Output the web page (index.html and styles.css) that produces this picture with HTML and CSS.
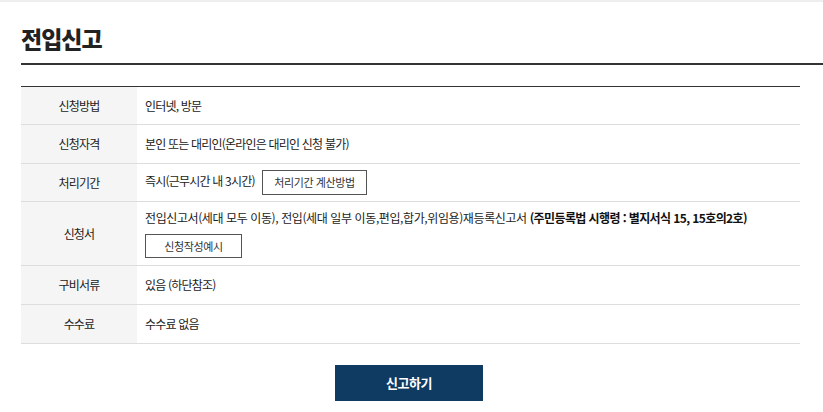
FILE: index.html
```html
<!DOCTYPE html>
<html lang="ko">
<head>
    <meta charset="UTF-8">
    <meta name="viewport" content="width=device-width, initial-scale=1.0">
    <title>전입신고</title>
    <link rel="stylesheet" href="styles.css">
</head>
<body>
    <div class="content">
        <h2 class="page-title">전입신고</h2>

        <table class="info-table">
            <tr class="short">
                <th>신청방법</th>
                <td>인터넷, 방문</td>
            </tr>
            <tr>
                <th>신청자격</th>
                <td>본인 또는 대리인(온라인은 대리인 신청 불가)</td>
            </tr>
            <tr class="short">
                <th>처리기간</th>
                <td>즉시(근무시간 내 3시간) <a href="#" class="btn-line">처리기간 계산방법</a></td>
            </tr>
            <tr class="tall">
                <th>신청서</th>
                <td>
                    <p>전입신고서(세대 모두 이동), 전입(세대 일부 이동,편입,합가,위임용)재등록신고서 <b>(주민등록법 시행령 : 별지서식 15, 15호의2호)</b></p>
                    <a href="#" class="btn-line wide">신청작성예시</a>
                </td>
            </tr>
            <tr>
                <th>구비서류</th>
                <td>있음 (하단참조)</td>
            </tr>
            <tr>
                <th>수수료</th>
                <td>수수료 없음</td>
            </tr>
        </table>

        <div class="btn-area">
            <a href="#" class="btn-submit">신고하기</a>
        </div>
    </div>
</body>
</html>
```

FILE: styles.css
```css
body {
    font-family: "Noto Sans CJK KR", "Noto Sans", sans-serif;
    color: #222;
    background-color: #ffffff;
    margin: 0;
    padding: 0;
    border-top: 2px solid #eeeeee;
}

.content {
    padding-left: 21px;
}

.page-title {
    margin: 0;
    padding: 21px 0 10px;
    font-size: 23px;
    line-height: 30px;
    font-weight: 900;
    letter-spacing: -1px;
    color: #222;
    border-bottom: 2px solid #333;
}

.info-table {
    width: 779px;
    margin-top: 21px;
    border-collapse: collapse;
    border-top: 1px solid #333;
    border-bottom: 1px solid #333;
    font-size: 12px;
    letter-spacing: -0.8px;
}

.info-table th,
.info-table td {
    height: 38px;
    padding: 0 8px;
    border-bottom: 1px solid #dddddd;
    line-height: 18px;
    vertical-align: middle;
}

.info-table tr.short th,
.info-table tr.short td {
    height: 37px;
}

.info-table th {
    width: 100px;
    background-color: #f5f5f5;
    font-weight: normal;
    text-align: center;
}

.info-table td {
    text-align: left;
}

.info-table tr.tall td {
    height: auto;
    padding-top: 7px;
    padding-bottom: 7px;
}

.info-table p {
    margin: 0;
    letter-spacing: -0.4px;
}

.info-table b {
    color: #111;
    letter-spacing: -0.6px;
}

.btn-line {
    display: inline-block;
    box-sizing: border-box;
    height: 25px;
    line-height: 23px;
    padding: 0 11px;
    margin-left: 5px;
    border: 1px solid #555;
    font-size: 11px;
    letter-spacing: -0.4px;
    color: #333;
    text-decoration: none;
    text-align: center;
    vertical-align: middle;
}

.btn-line.wide {
    display: block;
    width: 97px;
    height: 24px;
    line-height: 22px;
    padding: 0;
    margin: 7px 0 0;
}

.btn-area {
    width: 779px;
    margin-top: 21px;
    text-align: center;
}

.btn-submit {
    display: inline-block;
    width: 148px;
    height: 36px;
    line-height: 36px;
    margin-left: -3px;
    background-color: #0f3a62;
    color: white;
    font-size: 13px;
    font-weight: bold;
    letter-spacing: -0.5px;
    text-decoration: none;
}
```
